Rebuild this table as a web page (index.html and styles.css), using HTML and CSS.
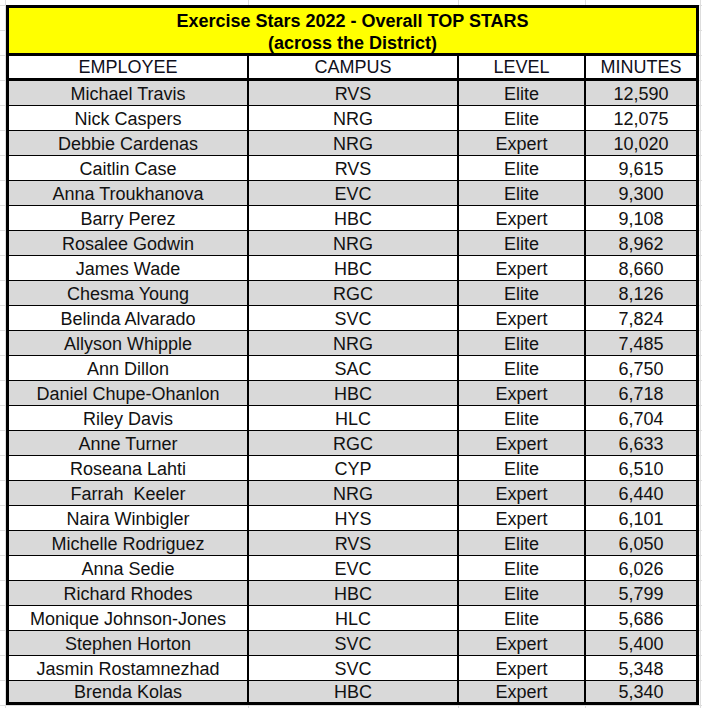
FILE: index.html
```html
<!DOCTYPE html>
<html lang="en">
<head>
<meta charset="utf-8">
<title>Exercise Stars 2022 - Overall TOP STARS</title>
<link rel="stylesheet" href="styles.css">
</head>
<body>
<div class="sheet">
  <div class="title">Exercise Stars 2022 - Overall TOP STARS<br>(across the District)</div>
  <div class="head">EMPLOYEE</div><div class="head">CAMPUS</div><div class="head">LEVEL</div><div class="head">MINUTES</div>
  <div class="c g">Michael Travis</div><div class="c g">RVS</div><div class="c g">Elite</div><div class="c g">12,590</div>
  <div class="c">Nick Caspers</div><div class="c">NRG</div><div class="c">Elite</div><div class="c">12,075</div>
  <div class="c g">Debbie Cardenas</div><div class="c g">NRG</div><div class="c g">Expert</div><div class="c g">10,020</div>
  <div class="c">Caitlin Case</div><div class="c">RVS</div><div class="c">Elite</div><div class="c">9,615</div>
  <div class="c g">Anna Troukhanova</div><div class="c g">EVC</div><div class="c g">Elite</div><div class="c g">9,300</div>
  <div class="c">Barry Perez</div><div class="c">HBC</div><div class="c">Expert</div><div class="c">9,108</div>
  <div class="c g">Rosalee Godwin</div><div class="c g">NRG</div><div class="c g">Elite</div><div class="c g">8,962</div>
  <div class="c">James Wade</div><div class="c">HBC</div><div class="c">Expert</div><div class="c">8,660</div>
  <div class="c g">Chesma Young</div><div class="c g">RGC</div><div class="c g">Elite</div><div class="c g">8,126</div>
  <div class="c">Belinda Alvarado</div><div class="c">SVC</div><div class="c">Expert</div><div class="c">7,824</div>
  <div class="c g">Allyson Whipple</div><div class="c g">NRG</div><div class="c g">Elite</div><div class="c g">7,485</div>
  <div class="c">Ann Dillon</div><div class="c">SAC</div><div class="c">Elite</div><div class="c">6,750</div>
  <div class="c g">Daniel Chupe-Ohanlon</div><div class="c g">HBC</div><div class="c g">Expert</div><div class="c g">6,718</div>
  <div class="c">Riley Davis</div><div class="c">HLC</div><div class="c">Elite</div><div class="c">6,704</div>
  <div class="c g">Anne Turner</div><div class="c g">RGC</div><div class="c g">Expert</div><div class="c g">6,633</div>
  <div class="c">Roseana Lahti</div><div class="c">CYP</div><div class="c">Elite</div><div class="c">6,510</div>
  <div class="c g">Farrah&nbsp; Keeler</div><div class="c g">NRG</div><div class="c g">Expert</div><div class="c g">6,440</div>
  <div class="c">Naira Winbigler</div><div class="c">HYS</div><div class="c">Expert</div><div class="c">6,101</div>
  <div class="c g">Michelle Rodriguez</div><div class="c g">RVS</div><div class="c g">Elite</div><div class="c g">6,050</div>
  <div class="c">Anna Sedie</div><div class="c">EVC</div><div class="c">Elite</div><div class="c">6,026</div>
  <div class="c g">Richard Rhodes</div><div class="c g">HBC</div><div class="c g">Elite</div><div class="c g">5,799</div>
  <div class="c">Monique Johnson-Jones</div><div class="c">HLC</div><div class="c">Elite</div><div class="c">5,686</div>
  <div class="c g">Stephen Horton</div><div class="c g">SVC</div><div class="c g">Expert</div><div class="c g">5,400</div>
  <div class="c">Jasmin Rostamnezhad</div><div class="c">SVC</div><div class="c">Expert</div><div class="c">5,348</div>
  <div class="c g">Brenda Kolas</div><div class="c g">HBC</div><div class="c g">Expert</div><div class="c g">5,340</div>
</div>
</body>
</html>
```
FILE: styles.css
```css
html, body {
  margin: 0;
  padding: 0;
}
body {
  width: 702px;
  height: 708px;
  padding: 5px 0 0 6px;
  box-sizing: border-box;
  background-color: #ffffff;
  background-image:
    linear-gradient(90deg, transparent 5px, #dddddd 5px 6px, transparent 6px 248px, #dddddd 248px 249px, transparent 249px 458px, #dddddd 458px 459px, transparent 459px 585px, #dddddd 585px 586px, transparent 586px 700px, #dddddd 700px 701px, transparent 701px),
    linear-gradient(180deg, transparent 24px, #dddddd 24px);
  background-size: 100% 100%, 100% 25px;
  background-position: 0 0, 0 6px;
  background-repeat: no-repeat, repeat-y;
  font-family: "Liberation Sans", Arial, sans-serif;
  color: #111111;
  overflow: hidden;
}
.sheet {
  display: grid;
  grid-template-columns: 238px 208px 125px 110px;
  grid-template-rows: 47px 24px repeat(24, 24px) 21px;
  column-gap: 2px;
  row-gap: 1px;
  width: fit-content;
  background: #000000;
  border: 3px solid #000000;
}
.title {
  grid-column: 1 / -1;
  margin-bottom: 2px;
  background: #ffff00;
  font-weight: bold;
  font-size: 18px;
  line-height: 22px;
  padding-top: 2px;
  text-align: center;
  color: #000000;
}
.head {
  margin-bottom: 2px;
  padding-top: 1px;
  background: #ffffff;
  font-size: 18px;
  display: flex;
  align-items: center;
  justify-content: center;
  color: #10101c;
}
.c {
  padding-top: 2px;
  background: #ffffff;
  font-size: 18px;
  display: flex;
  align-items: center;
  justify-content: center;
  white-space: pre;
}
.c.g {
  background: #d9d9d9;
}
```
